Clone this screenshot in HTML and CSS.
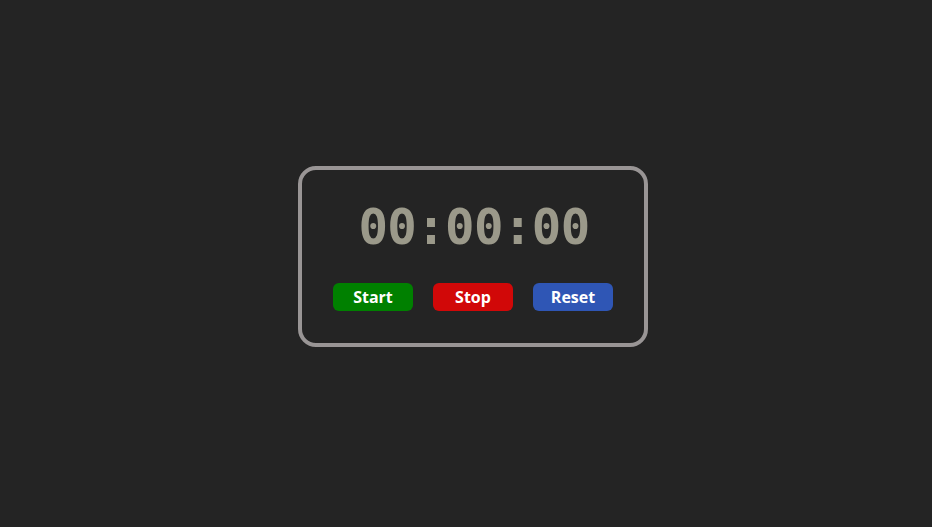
FILE: index.html
```html
<!DOCTYPE html>
<html>
<head>
<meta charset="utf-8">
<link rel="stylesheet" href="styles.css">
</head>
<body>
<div class="stopwatch">
  <div class="display">00:00:00</div>
  <div class="controls">
    <button class="btn btn-start">Start</button>
    <button class="btn btn-stop">Stop</button>
    <button class="btn btn-reset">Reset</button>
  </div>
</div>
</body>
</html>
```
FILE: styles.css
```css
html, body {
  margin: 0;
  height: 100%;
}
body {
  background: #242424;
  display: flex;
  align-items: center;
  justify-content: center;
  padding: 0 0 14px 14px;
  box-sizing: border-box;
}
.stopwatch {
  width: 350px;
  height: 181px;
  box-sizing: border-box;
  border: 4px solid #999595;
  border-radius: 18px;
  display: flex;
  flex-direction: column;
  align-items: center;
}
.display {
  font-family: "DejaVu Sans Mono", monospace;
  font-weight: bold;
  font-size: 49px;
  letter-spacing: -0.6px;
  color: #9b998a;
  line-height: 60px;
  margin-top: 28px;
  padding-left: 2px;
}
.controls {
  display: flex;
  gap: 20px;
  margin-top: 25px;
}
.btn {
  width: 80px;
  height: 28px;
  border: none;
  border-radius: 6px;
  color: #fff;
  font-family: "Open Sans", "DejaVu Sans", sans-serif;
  font-weight: bold;
  font-size: 16px;
  padding: 0;
}
.btn-start { background: #008000; }
.btn-stop { background: #d10808; }
.btn-reset { background: #2f56b5; }
```
